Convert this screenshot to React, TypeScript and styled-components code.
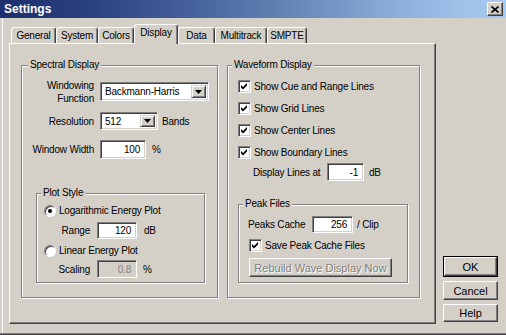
import styled, { createGlobalStyle } from "styled-components";

const Global = createGlobalStyle`
  html, body { margin: 0; padding: 0; background: #d4d0c8; }
  body {
    font-family: "Liberation Sans", Arial, sans-serif;
    font-size: 10px;
    letter-spacing: -0.2px;
    color: #000;
  }
  * { box-sizing: border-box; }
`;

const Window = styled.div`
  width: 506px;
  height: 335px;
  background: #d4d0c8;
  display: flex;
  flex-direction: column;
  box-shadow: inset 0 -1px #404040, inset 0 -2px #808080, inset 2px 0 #d4d0c8,
    inset 3px 0 #fff;
`;

const TitleBar = styled.div`
  height: 18px;
  display: flex;
  align-items: center;
  justify-content: space-between;
  padding: 0 3px 0 4px;
  background: linear-gradient(
    to right,
    #1c2e6e 0%,
    #2a417f 18%,
    #3a5592 30%,
    #4d69a2 42%,
    #5f7fb2 54%,
    #7596c4 66%,
    #8aaed9 78%,
    #9cc0e8 90%,
    #a8cbf1 100%
  );
`;

const Title = styled.span`
  color: #fff;
  font-weight: bold;
  font-size: 12px;
  letter-spacing: 0;
`;

const CloseButton = styled.div`
  width: 16px;
  height: 14px;
  background: #d4d0c8;
  border: 1px solid;
  border-color: #fff #404040 #404040 #fff;
  box-shadow: inset -1px -1px #808080;
  display: flex;
  align-items: center;
  justify-content: center;
`;

const Body = styled.div`
  flex: 1;
  display: flex;
  gap: 7px;
  padding: 6px 8px 11px 9px;
`;

const Main = styled.div`
  width: 427px;
  display: flex;
  flex-direction: column;
`;

const TabStrip = styled.div`
  height: 19px;
  display: flex;
  align-items: flex-end;
  padding-left: 2px;
  position: relative;
  z-index: 1;
`;

const Tab = styled.div<{ $w: number; $active?: boolean }>`
  width: ${(p) => p.$w}px;
  height: ${(p) => (p.$active ? 20 : 16)}px;
  margin-bottom: ${(p) => (p.$active ? -1 : 0)}px;
  background: #d4d0c8;
  border: 1px solid;
  border-bottom: none;
  border-color: #fff #404040 transparent #fff;
  border-radius: 3px 3px 0 0;
  box-shadow: inset -1px 0 #808080;
  display: flex;
  align-items: ${(p) => (p.$active ? "flex-start" : "center")};
  padding-top: ${(p) => (p.$active ? 2 : 0)}px;
  justify-content: center;
  white-space: nowrap;
`;

const Panel = styled.div`
  height: 281px;
  border: 1px solid;
  border-color: #fff #404040 #404040 #fff;
  box-shadow: inset -1px -1px #808080;
  padding: 15px 15px 0 11px;
  display: flex;
  align-items: flex-start;
  gap: 9px;
`;

const Group = styled.fieldset<{ $w: number; $h: number; $ml?: number }>`
  margin: 0 0 0 ${(p) => p.$ml ?? 0}px;
  padding: 0;
  min-width: 0;
  width: ${(p) => p.$w}px;
  height: ${(p) => p.$h}px;
  border: 1px solid #808080;
  box-shadow: 1px 1px 0 #fff, inset 1px 1px 0 #fff;
  display: flex;
  flex-direction: column;
`;

const Legend = styled.legend<{ $off?: number }>`
  margin-left: ${(p) => p.$off ?? 4}px;
  padding: 0 2px;
  line-height: 12px;
  background: #d4d0c8;
`;

const Column = styled.div<{ $pt: number; $pb: number; $gap?: number }>`
  flex: 1;
  display: flex;
  flex-direction: column;
  padding-top: ${(p) => p.$pt}px;
  padding-bottom: ${(p) => p.$pb}px;
  gap: ${(p) => p.$gap ?? 0}px;
`;

const Row = styled.div<{ $h: number; $mt?: number; $pl?: number; $gap?: number }>`
  height: ${(p) => p.$h}px;
  margin-top: ${(p) => p.$mt ?? 0}px;
  padding-left: ${(p) => p.$pl ?? 0}px;
  display: flex;
  align-items: center;
  gap: ${(p) => p.$gap ?? 0}px;
  white-space: nowrap;
`;

const Label = styled.div<{ $w: number; $right?: boolean }>`
  width: ${(p) => p.$w}px;
  text-align: ${(p) => (p.$right ? "right" : "left")};
  line-height: 13px;
  flex-shrink: 0;
`;

const Field = styled.div<{ $w: number; $h: number; $disabled?: boolean }>`
  width: ${(p) => p.$w}px;
  height: ${(p) => p.$h}px;
  background: ${(p) => (p.$disabled ? "#d4d0c8" : "#fff")};
  color: ${(p) => (p.$disabled ? "#808080" : "#000")};
  border: 1px solid;
  border-color: #808080 #fff #fff #808080;
  box-shadow: inset 1px 1px #404040, inset -1px -1px #d4d0c8;
  display: flex;
  align-items: center;
  justify-content: flex-end;
  padding-right: 5px;
  flex-shrink: 0;
`;

const Combo = styled(Field)`
  justify-content: space-between;
  padding: 2px 2px 2px 4px;
`;

const DropButton = styled.div`
  width: 15px;
  height: 100%;
  background: #d4d0c8;
  border: 1px solid;
  border-color: #d4d0c8 #404040 #404040 #d4d0c8;
  box-shadow: inset 1px 1px #fff, inset -1px -1px #808080;
  display: flex;
  align-items: center;
  justify-content: center;
`;

const Unit = styled.span<{ $ml: number }>`
  margin-left: ${(p) => p.$ml}px;
`;

const CheckBox = styled.div`
  width: 13px;
  height: 13px;
  background: #fff;
  border: 1px solid;
  border-color: #808080 #fff #fff #808080;
  box-shadow: inset 1px 1px #404040, inset -1px -1px #d4d0c8;
  display: flex;
  align-items: center;
  justify-content: center;
  margin-right: 3px;
  flex-shrink: 0;
`;

const Radio = styled.div<{ $on?: boolean }>`
  width: 12px;
  height: 12px;
  border-radius: 50%;
  background: #fff;
  border: 1px solid;
  border-color: #808080 #fff #fff #808080;
  box-shadow: inset 1px 1px #404040;
  display: flex;
  align-items: center;
  justify-content: center;
  margin-right: 3px;
  flex-shrink: 0;
  &::after {
    content: "";
    width: 4px;
    height: 4px;
    border-radius: 50%;
    background: ${(p) => (p.$on ? "#000" : "transparent")};
  }
`;

const Button = styled.div<{ $w: number; $h: number; $disabled?: boolean }>`
  width: ${(p) => p.$w}px;
  height: ${(p) => p.$h}px;
  background: #d4d0c8;
  border: 1px solid;
  border-color: #fff #404040 #404040 #fff;
  box-shadow: inset -1px -1px #808080;
  display: flex;
  align-items: center;
  justify-content: center;
  font-size: 11px;
  letter-spacing: 0;
  color: ${(p) => (p.$disabled ? "#808080" : "#000")};
  text-shadow: ${(p) => (p.$disabled ? "1px 1px 0 #fff" : "none")};
  white-space: nowrap;
`;

const DefaultFrame = styled.div`
  border: 1px solid #000;
`;

const Side = styled.div`
  width: 55px;
  display: flex;
  flex-direction: column;
  justify-content: flex-end;
  gap: 4px;
  padding-bottom: 2px;
`;

const Arrow = () => (
  <svg width="7" height="4" viewBox="0 0 7 4">
    <polygon points="0,0 7,0 3.5,4" fill="#000" />
  </svg>
);

const Check = () => (
  <svg width="9" height="9" viewBox="0 0 9 9">
    <path d="M1 3 L3 5 L7 1 L7 3.5 L3 7.5 L1 5.5 Z" fill="#000" />
  </svg>
);

const tabs = [
  { name: "General", w: 45 },
  { name: "System", w: 42 },
  { name: "Colors", w: 36 },
  { name: "Display", w: 44, active: true },
  { name: "Data", w: 37 },
  { name: "Multitrack", w: 52 },
  { name: "SMPTE", w: 40 },
];

const checks = [
  "Show Cue and Range Lines",
  "Show Grid Lines",
  "Show Center Lines",
  "Show Boundary Lines",
];

export default function App() {
  return (
    <Window>
      <Global />
      <TitleBar>
        <Title>Settings</Title>
        <CloseButton>
          <svg width="8" height="7" viewBox="0 0 8 7">
            <path d="M0.5 0.5 L7.5 6.5 M7.5 0.5 L0.5 6.5" stroke="#000" strokeWidth="1.6" />
          </svg>
        </CloseButton>
      </TitleBar>
      <Body>
        <Main>
          <TabStrip>
            {tabs.map((t) => (
              <Tab key={t.name} $w={t.w} $active={t.active}>
                {t.name}
              </Tab>
            ))}
          </TabStrip>
          <Panel>
            <Group $w={197} $h={239}>
              <Legend $off={6}>Spectral Display</Legend>
              <Column $pt={11} $pb={14}>
                <Row $h={19} $gap={6}>
                  <Label $w={72} $right>
                    Windowing
                    <br />
                    Function
                  </Label>
                  <Combo $w={109} $h={19}>
                    <span>Backmann-Harris</span>
                    <DropButton>
                      <Arrow />
                    </DropButton>
                  </Combo>
                </Row>
                <Row $h={18} $mt={11} $gap={6}>
                  <Label $w={72} $right>
                    Resolution
                  </Label>
                  <Combo $w={58} $h={18}>
                    <span>512</span>
                    <DropButton>
                      <Arrow />
                    </DropButton>
                  </Combo>
                  <Unit $ml={-2}>Bands</Unit>
                </Row>
                <Row $h={19} $mt={10} $gap={6}>
                  <Label $w={72} $right>
                    Window Width
                  </Label>
                  <Field $w={46} $h={19}>
                    100
                  </Field>
                  <Unit $ml={0}>%</Unit>
                </Row>
                <Group $w={169} $h={96} $ml={14} style={{ marginTop: "auto" }}>
                  <Legend>Plot Style</Legend>
                  <Column $pt={5} $pb={4}>
                    <Row $h={13} $pl={7}>
                      <Radio $on />
                      Logarithmic Energy Plot
                    </Row>
                    <Row $h={17} $mt={5} $gap={7}>
                      <Label $w={53} $right>
                        Range
                      </Label>
                      <Field $w={40} $h={17}>
                        120
                      </Field>
                      <Unit $ml={0}>dB</Unit>
                    </Row>
                    <Row $h={13} $mt={5} $pl={7}>
                      <Radio />
                      Linear Energy Plot
                    </Row>
                    <Row $h={18} $mt={3} $gap={7}>
                      <Label $w={53} $right>
                        Scaling
                      </Label>
                      <Field $w={40} $h={18} $disabled>
                        0.8
                      </Field>
                      <Unit $ml={-1}>%</Unit>
                    </Row>
                  </Column>
                </Group>
              </Column>
            </Group>
            <Group $w={193} $h={239}>
              <Legend>Waveform Display</Legend>
              <Column $pt={9} $pb={14}>
                {checks.map((c, i) => (
                  <Row key={c} $h={13} $mt={i ? 9 : 0} $pl={10}>
                    <CheckBox>
                      <Check />
                    </CheckBox>
                    {c}
                  </Row>
                ))}
                <Row $h={18} $mt={4} $pl={25}>
                  <Label $w={74}>Display Lines at</Label>
                  <Field $w={37} $h={18}>
                    -1
                  </Field>
                  <Unit $ml={5}>dB</Unit>
                </Row>
                <Group $w={170} $h={85} $ml={10} style={{ marginTop: "auto" }}>
                  <Legend>Peak Files</Legend>
                  <Column $pt={6} $pb={5}>
                    <Row $h={17} $pl={9}>
                      <Label $w={64}>Peaks Cache</Label>
                      <Field $w={41} $h={17}>
                        256
                      </Field>
                      <Unit $ml={4}>/ Clip</Unit>
                    </Row>
                    <Row $h={13} $mt={6} $pl={10}>
                      <CheckBox>
                        <Check />
                      </CheckBox>
                      Save Peak Cache Files
                    </Row>
                    <Row $h={19} $mt={6} $pl={10}>
                      <Button $w={143} $h={19} $disabled>
                        Rebuild Wave Display Now
                      </Button>
                    </Row>
                  </Column>
                </Group>
              </Column>
            </Group>
          </Panel>
        </Main>
        <Side>
          <DefaultFrame>
            <Button $w={53} $h={19}>
              OK
            </Button>
          </DefaultFrame>
          <Button $w={55} $h={19}>
            Cancel
          </Button>
          <Button $w={55} $h={18}>
            Help
          </Button>
        </Side>
      </Body>
    </Window>
  );
}
